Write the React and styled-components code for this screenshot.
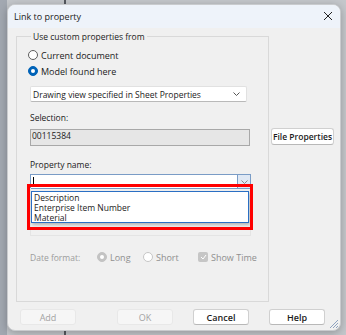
import styled, { createGlobalStyle } from "styled-components";

const GlobalStyle = createGlobalStyle`
  html, body {
    margin: 0;
    padding: 0;
    background: #aab0b8;
  }
  body {
    font-family: "Open Sans", "Noto Sans", sans-serif;
    font-size: 8.5px;
    color: #1b1b1b;
  }
`;

const Backdrop = styled.div`
  width: 346px;
  height: 335px;
  overflow: hidden;
  display: flex;
  padding: 4px 5px 4px 7px;
  box-sizing: border-box;
  background:
    linear-gradient(90deg, transparent 64px, #55595f 64px, #55595f 66px, transparent 66px),
    linear-gradient(90deg, #a2a8b1 0, #a2a8b1 7px, #c4c7cb 7px, #c4c7cb 100%);
`;

const Dialog = styled.div`
  width: 334px;
  height: 327px;
  display: flex;
  flex-direction: column;
  background: #f0f0f0;
  border: 1px solid #c9cbce;
  border-radius: 8px;
  overflow: hidden;
  box-sizing: border-box;
  box-shadow: 0 2px 8px rgba(0, 0, 0, 0.25);
`;

const TitleBar = styled.div`
  height: 22px;
  flex: none;
  display: flex;
  align-items: center;
  justify-content: space-between;
  padding: 0 6px 1px 6px;
  background: #eef3fa;
  font-size: 9px;
`;

const CloseButton = styled.div`
  width: 12px;
  height: 12px;
  display: flex;
  align-items: center;
  justify-content: center;
`;

const Content = styled.div`
  flex: 1;
  display: flex;
  gap: 2px;
  padding: 2px 0 0 8px;
`;

const Group = styled.fieldset`
  margin: 0;
  padding: 0 0 0 11px;
  width: 250px;
  height: 272px;
  box-sizing: border-box;
  border: 1px solid #d9d9d9;
  display: flex;
  flex-direction: column;
`;

const Legend = styled.legend`
  padding: 0 2px;
  margin-left: 3px;
  line-height: 13px;
`;

const RadioRow = styled.label`
  display: flex;
  align-items: center;
  gap: 3px;
  height: 14px;
  margin-top: ${(p) => p.$top || 0}px;
  color: ${(p) => (p.$disabled ? "#9c9c9c" : "#1b1b1b")};
  font-size: ${(p) => (p.$big ? "9px" : "inherit")};
`;

const Radio = styled.span`
  width: 10px;
  height: 10px;
  box-sizing: border-box;
  border-radius: 50%;
  flex: none;
  background: ${(p) => (p.$checked ? (p.$disabled ? "#c3c3c3" : "#0063b8") : "#ffffff")};
  border: 1px solid ${(p) => (p.$checked ? (p.$disabled ? "#c3c3c3" : "#0063b8") : p.$disabled ? "#c6c6c6" : "#5d5d5d")};
  display: flex;
  align-items: center;
  justify-content: center;
  &::after {
    content: "";
    display: ${(p) => (p.$checked ? "block" : "none")};
    width: 4px;
    height: 4px;
    border-radius: 50%;
    background: #ffffff;
  }
`;

const Select = styled.div`
  margin: 8px 0 0 2px;
  width: 217px;
  height: 16px;
  box-sizing: border-box;
  background: #ffffff;
  border: 1px solid #e1e1e1;
  border-bottom-color: #b9b9b9;
  border-radius: 2px;
  display: flex;
  align-items: center;
  justify-content: space-between;
  padding: 0 6px 0 2px;
`;

const FieldLabel = styled.div`
  margin: ${(p) => p.$top}px 0 0 2px;
  line-height: 13px;
`;

const ReadOnlyBox = styled.div`
  margin: 5px 0 0 2px;
  width: 220px;
  height: 17px;
  box-sizing: border-box;
  background: #e6e6e6;
  border: 1px solid #a8a8a8;
  padding: 0 1px;
  line-height: 12px;
`;

const ComboWrap = styled.div`
  position: relative;
  margin: 3px 0 0 2px;
  width: 221px;
`;

const ComboInput = styled.div`
  height: 15px;
  box-sizing: border-box;
  background: #ffffff;
  border: 1px solid #7a9cc6;
  display: flex;
`;

const Caret = styled.div`
  flex: 1;
  padding-left: 2px;
  display: flex;
  align-items: center;
  &::before {
    content: "";
    width: 1px;
    height: 9px;
    background: #000;
  }
`;

const ComboArrow = styled.div`
  width: 12px;
  background: #dfe8f4;
  border-left: 1px solid #7a9cc6;
  display: flex;
  align-items: center;
  justify-content: center;
`;

const ListShell = styled.div`
  height: 48px;
  margin-top: -1px;
  box-sizing: border-box;
  border: 1px solid #e4e4e4;
  border-top: none;
`;

const DropList = styled.ul`
  position: absolute;
  left: 1px;
  top: 17px;
  width: 218px;
  margin: 0;
  padding: 1px 0 0 2px;
  list-style: none;
  box-sizing: border-box;
  height: 32px;
  background: #ffffff;
  border: 1px solid #2a6fc4;
  box-shadow: 1px 2px 3px rgba(0, 0, 0, 0.25);
  font-size: 8.5px;
`;

const DropItem = styled.li`
  height: 10px;
  line-height: 10px;
  overflow: visible;
  white-space: nowrap;
`;

const Highlight = styled.div`
  position: absolute;
  left: -3px;
  top: 10px;
  width: 226px;
  height: 46px;
  box-sizing: border-box;
  border: 3px solid #ff0000;
  pointer-events: none;
`;

const DateRow = styled.div`
  margin: 14px 0 0 2px;
  height: 14px;
  display: flex;
  align-items: center;
  color: #9c9c9c;
`;

const DateLabel = styled.span`
  width: 67px;
`;

const DateOption = styled(RadioRow)`
  margin-top: 0;
  width: ${(p) => p.$w}px;
  color: #8f8f8f;
  font-size: 9px;
`;

const CheckBox = styled.span`
  width: 10px;
  height: 10px;
  border-radius: 2px;
  background: #c6c6c6;
  display: flex;
  align-items: center;
  justify-content: center;
  flex: none;
`;

const Side = styled.div`
  padding-top: 98px;
`;

const Button = styled.button`
  font: inherit;
  font-size: ${(p) => p.$fs || 9}px;
  font-weight: ${(p) => (p.$disabled ? 400 : 600)};
  width: ${(p) => p.$w || 56}px;
  height: ${(p) => p.$h || 16}px;
  padding: 0;
  white-space: nowrap;
  border-radius: 3px;
  background: ${(p) => (p.$disabled ? "#f6f6f6" : "#ffffff")};
  color: ${(p) => (p.$disabled ? "#a3a3a3" : "#1b1b1b")};
  border: 1px solid ${(p) => (p.$disabled ? "#e8e8e8" : "#d0d0d0")};
  border-bottom-color: ${(p) => (p.$disabled ? "#e8e8e8" : "#b8b8b8")};
`;

const Footer = styled.div`
  flex: none;
  height: 26px;
  display: flex;
  align-items: flex-start;
  padding: 5px 0 0 12px;
  box-sizing: border-box;
  position: relative;
`;

const ButtonSlot = styled.div`
  margin-left: ${(p) => p.$gap}px;
`;

const Grip = styled.svg`
  position: absolute;
  right: 1px;
  bottom: 1px;
`;

const App = () => {
  return (
    <>
      <GlobalStyle />
      <Backdrop>
        <Dialog>
          <TitleBar>
            <span>Link to property</span>
            <CloseButton>
              <svg width="10" height="10" viewBox="0 0 10 10">
                <path d="M1 1L9 9M9 1L1 9" stroke="#222" strokeWidth="1" fill="none" />
              </svg>
            </CloseButton>
          </TitleBar>
          <Content>
            <Group>
              <Legend>Use custom properties from</Legend>
              <RadioRow $top={5} $big>
                <Radio />
                Current document
              </RadioRow>
              <RadioRow $top={2} $big>
                <Radio $checked />
                Model found here
              </RadioRow>
              <Select>
                <span>Drawing view specified in Sheet Properties</span>
                <svg width="7" height="4" viewBox="0 0 7 4">
                  <path d="M0.5 0.5L3.5 3.5L6.5 0.5" stroke="#555" fill="none" />
                </svg>
              </Select>
              <FieldLabel $top={9}>Selection:</FieldLabel>
              <ReadOnlyBox>00115384</ReadOnlyBox>
              <FieldLabel $top={12}>Property name:</FieldLabel>
              <ComboWrap>
                <ComboInput>
                  <Caret />
                  <ComboArrow>
                    <svg width="7" height="4" viewBox="0 0 7 4">
                      <path d="M0.5 0.5L3.5 3.5L6.5 0.5" stroke="#8a8a8a" fill="none" />
                    </svg>
                  </ComboArrow>
                </ComboInput>
                <ListShell />
                <DropList>
                  <DropItem>Description</DropItem>
                  <DropItem>Enterprise Item Number</DropItem>
                  <DropItem>Material</DropItem>
                </DropList>
                <Highlight />
              </ComboWrap>
              <DateRow>
                <DateLabel>Date format:</DateLabel>
                <DateOption $w={46} $disabled>
                  <Radio $checked $disabled />
                  Long
                </DateOption>
                <DateOption $w={55} $disabled>
                  <Radio $disabled />
                  Short
                </DateOption>
                <DateOption $w={70} $disabled>
                  <CheckBox>
                    <svg width="7" height="6" viewBox="0 0 7 6">
                      <path d="M1 3L3 5L6 1" stroke="#fff" strokeWidth="1" fill="none" />
                    </svg>
                  </CheckBox>
                  Show Time
                </DateOption>
              </DateRow>
            </Group>
            <Side>
              <Button $w={63} $h={17} $fs={8.5}>File Properties</Button>
            </Side>
          </Content>
          <Footer>
            <Button $disabled>Add</Button>
            <ButtonSlot $gap={41}>
              <Button $disabled>OK</Button>
            </ButtonSlot>
            <ButtonSlot $gap={20}>
              <Button>Cancel</Button>
            </ButtonSlot>
            <ButtonSlot $gap={20}>
              <Button>Help</Button>
            </ButtonSlot>
            <Grip width="10" height="10" viewBox="0 0 10 10">
              <path d="M9 1L1 9M9 4L4 9M9 7L7 9" stroke="#8fa3c0" strokeWidth="1" />
            </Grip>
          </Footer>
        </Dialog>
      </Backdrop>
    </>
  );
};

export default App;
